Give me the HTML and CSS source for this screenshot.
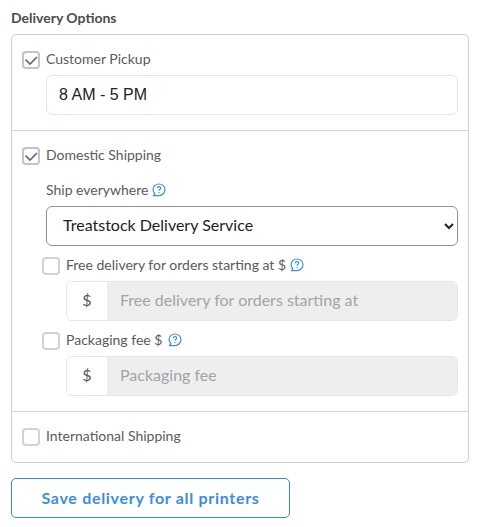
FILE: index.html
```html
<!DOCTYPE html>
<html lang="en">
<head>
<meta charset="utf-8">
<title>Delivery Options</title>
<link rel="stylesheet" href="styles.css">
</head>
<body>
<main class="page">
  <h2 class="title">Delivery Options</h2>
  <div class="panel">
    <section class="section section-pickup">
      <label class="check">
        <span class="box box-on"><svg viewBox="0 0 18 18" class="tick"><path d="M3.500 8.500 8 13 15 6"/></svg></span>
        <span class="label-text">Customer Pickup</span>
      </label>
      <input class="field hours" type="text" value="8 AM - 5 PM">
    </section>
    <section class="section section-domestic">
      <label class="check">
        <span class="box box-on"><svg viewBox="0 0 18 18" class="tick"><path d="M3.500 8.500 8 13 15 6"/></svg></span>
        <span class="label-text">Domestic Shipping</span>
      </label>
      <div class="nested">
        <div class="help-line">
          <span class="label-text">Ship everywhere</span>
          <svg class="help" viewBox="0 0 14 14"><path class="bubble" d="M7 1C10.3 1 13 3.500 13 6.600 13 9.700 10.300 12.600 7 12.600H1.600L2.800 10.400C1.600 9.300 1 8 1 6.600 1 3.500 3.700 1 7 1Z"/><path class="mark" d="M5.300 5.300C5.300 4.300 6.100 3.700 7 3.700 7.900 3.700 8.700 4.300 8.700 5.200 8.700 6.300 7 6.400 7 7.800M7 8.900V10"/></svg>
        </div>
        <select class="select">
          <option>Treatstock Delivery Service</option>
        </select>
        <div class="option">
          <label class="check">
            <span class="box"></span>
            <span class="label-text">Free delivery for orders starting at $</span>
            <svg class="help" viewBox="0 0 14 14"><path class="bubble" d="M7 1C10.3 1 13 3.500 13 6.600 13 9.700 10.300 12.600 7 12.600H1.600L2.800 10.400C1.600 9.300 1 8 1 6.600 1 3.500 3.700 1 7 1Z"/><path class="mark" d="M5.300 5.300C5.300 4.300 6.100 3.700 7 3.700 7.900 3.700 8.700 4.300 8.700 5.200 8.700 6.300 7 6.400 7 7.800M7 8.900V10"/></svg>
          </label>
          <div class="group">
            <span class="addon">$</span>
            <input class="group-input" type="text" placeholder="Free delivery for orders starting at" disabled>
          </div>
        </div>
        <div class="option">
          <label class="check check-fee">
            <span class="box"></span>
            <span class="label-text">Packaging fee $</span>
            <svg class="help" viewBox="0 0 14 14"><path class="bubble" d="M7 1C10.3 1 13 3.500 13 6.600 13 9.700 10.300 12.600 7 12.600H1.600L2.800 10.400C1.600 9.300 1 8 1 6.600 1 3.500 3.700 1 7 1Z"/><path class="mark" d="M5.300 5.300C5.300 4.300 6.100 3.700 7 3.700 7.900 3.700 8.700 4.300 8.700 5.200 8.700 6.300 7 6.400 7 7.800M7 8.900V10"/></svg>
          </label>
          <div class="group">
            <span class="addon">$</span>
            <input class="group-input" type="text" placeholder="Packaging fee" disabled>
          </div>
        </div>
      </div>
    </section>
    <section class="section section-intl">
      <label class="check">
        <span class="box"></span>
        <span class="label-text">International Shipping</span>
      </label>
    </section>
  </div>
  <button class="save" type="button">Save delivery for all printers</button>
</main>
</body>
</html>
```

FILE: styles.css
```css
* { box-sizing: border-box; }
html, body { margin: 0; background: #fff; }
body {
  font-family: "Lato", "Open Sans", sans-serif;
  font-size: 14px;
  color: #5a5a60;
}
.page { padding: 0 11px; width: 480px; }
.title {
  margin: 0;
  padding-top: 10px;
  height: 34px;
  font-size: 14px;
  line-height: 15px;
  font-weight: 700;
  color: #4b4b50;
}
.panel {
  border: 1px solid #ccced4;
  border-radius: 5px;
  width: 458px;
}
.section { padding: 16px 10px 0; }
.section + .section { border-top: 1px solid #d2d3d8; }
.section-pickup { height: 95px; }
.section-domestic { height: 281px; }
.section-intl { height: 51px; }
.check {
  display: flex;
  align-items: flex-start;
  gap: 6px;
  height: 18px;
}
.label-text { line-height: 16px; }
.box {
  flex: none;
  width: 18px;
  height: 18px;
  border: 2px solid #d0d2d6;
  border-radius: 4px;
  background: #fff;
}
.box-on { border-color: #c2c3c8; }
.tick {
  display: block;
  width: 18px;
  height: 18px;
  margin: -2px;
  fill: none;
  stroke: #66686e;
  stroke-width: 1.7;
}
.field {
  display: block;
  margin: 6px 0 0 24px;
  width: 412px;
  height: 40px;
  padding: 0 12px;
  border: 1px solid #dfe6f0;
  border-radius: 6px;
  font: 16px "Liberation Sans", sans-serif;
  color: #222;
  background: #fff;
}
.nested { margin-left: 24px; }
.help-line {
  display: flex;
  align-items: flex-start;
  gap: 4px;
  height: 17px;
  margin-top: 17px;
}
.help { flex: none; width: 14px; height: 14px; margin-top: 1px; fill: none; stroke-width: 1.2; }
.bubble { stroke: #3c8fe0; }
.mark { stroke: #3c8fe0; }
.check .help { margin-left: -2px; }
.check-fee .label-text { margin-right: 2px; }
.select {
  display: block;
  width: 412px;
  height: 40px;
  margin-top: 7px;
  padding: 0 12px 3px;
  border: 1px solid #8f9299;
  border-radius: 6px;
  background: #fff;
  font: 16px "Lato", sans-serif;
  color: #222;
}
.option { margin-top: 11px; margin-left: -4px; }
.group {
  display: flex;
  height: 40px;
  margin: 6px 0 0 24px;
  width: 392px;
  border: 1px solid #e2e6ec;
  border-radius: 6px;
  overflow: hidden;
}
.addon {
  flex: none;
  width: 40px;
  display: flex;
  align-items: center;
  justify-content: center;
  padding-bottom: 3px;
  font: 16px "Lato", sans-serif;
  color: #55565b;
  background: #fff;
}
.group-input {
  flex: 1;
  min-width: 0;
  padding: 0 13px 3px;
  border: 0;
  background: #eeeeef;
  font: 16px "Lato", sans-serif;
}
.group-input::placeholder { color: #a3a3a6; opacity: 1; }
.save {
  display: block;
  margin-top: 15px;
  width: 279px;
  height: 40px;
  padding: 0 0 2px;
  border: 1px solid #2f8ae0;
  border-radius: 5px;
  background: #fff;
  color: #3b8ee0;
  font: 700 16px "Lato", sans-serif;
  letter-spacing: 0.7px;
}
```
